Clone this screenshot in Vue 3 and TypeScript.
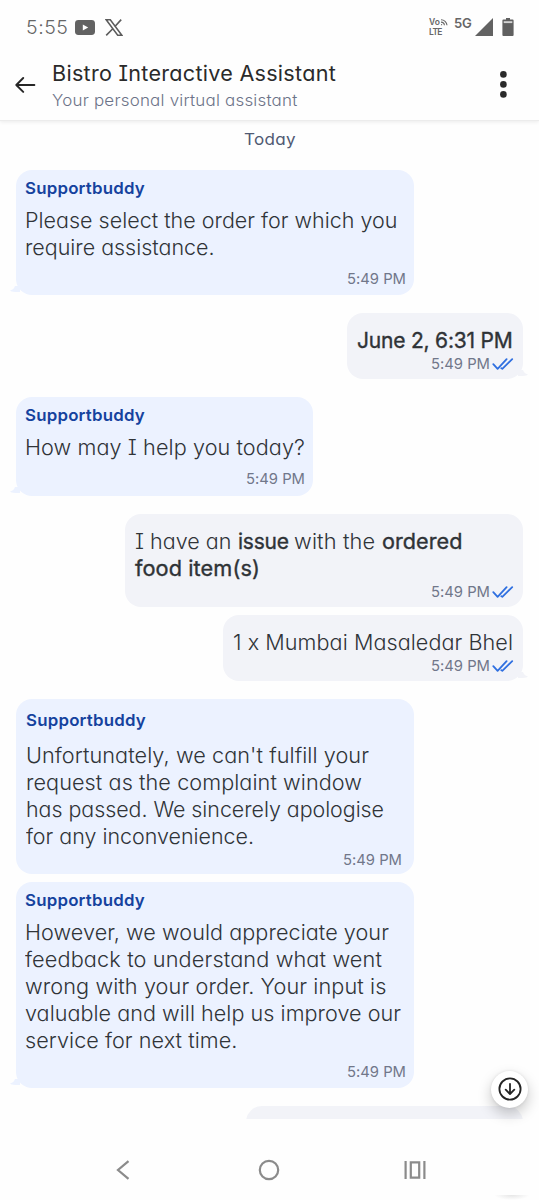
<script setup lang="ts">
interface Run {
  text: string
  width: number
  strong?: boolean
}

interface Message {
  id: number
  from: 'bot' | 'user'
  lines: Run[][]
  tail?: boolean
  spaced?: boolean
  follows?: boolean
}

const line = (text: string, width: number, strong = false): Run[] => [{ text, width, strong }]

const messages: Message[] = [
  {
    id: 1,
    from: 'bot',
    tail: true,
    lines: [line('Please select the order for which you', 372.5), line('require assistance.', 189.5)],
  },
  { id: 2, from: 'user', tail: true, lines: [line('June 2, 6:31 PM', 155.5, true)] },
  { id: 3, from: 'bot', tail: true, lines: [line('How may I help you today?', 280)] },
  {
    id: 4,
    from: 'user',
    lines: [
      [
        { text: 'I have an ', width: 102.5 },
        { text: 'issue ', width: 56.5, strong: true },
        { text: 'with the ', width: 87.5 },
        { text: 'ordered', width: 80.5, strong: true },
      ],
      line('food item(s)', 125, true),
    ],
  },
  { id: 5, from: 'user', tail: true, follows: true, lines: [line('1 x Mumbai Masaledar Bhel', 280)] },
  {
    id: 6,
    from: 'bot',
    spaced: true,
    lines: [
      line("Unfortunately, we can't fulfill your", 343),
      line('request as the complaint window', 336),
      line('has passed. We sincerely apologise', 358),
      line('for any inconvenience.', 228),
    ],
  },
  {
    id: 7,
    from: 'bot',
    tail: true,
    follows: true,
    lines: [
      line('However, we would appreciate your', 364),
      line('feedback to understand what went', 357),
      line('wrong with your order. Your input is', 361.5),
      line('valuable and will help us improve our', 376),
      line('service for next time.', 212.5),
    ],
  },
]

// Fills the given width with a text run: part glyph stretch, part tracking.
const vFit = {
  mounted(el: HTMLElement, binding: { value: number }) {
    const count = (el.textContent ?? '').length
    const natural = el.getBoundingClientRect().width
    if (!count || !natural) return
    const stretch = Math.sqrt(binding.value / natural)
    el.style.letterSpacing = `${(binding.value / stretch - natural) / count}px`
    el.style.transform = `scaleX(${stretch})`
    el.style.width = `${binding.value}px`
  },
}
</script>

<template>
  <div class="screen">
    <div class="status">
      <span v-fit="42.5" class="clock">5:55</span>
      <svg class="yt" width="20" height="15" viewBox="0 0 20 15">
        <rect width="20" height="15" rx="3.4" fill="#626262" />
        <path d="M7.8 4.4v6.2l5.4-3.1z" fill="#fff" />
      </svg>
      <svg class="x" width="18" height="17" viewBox="0 0 18 17" fill="none" stroke="#5c5c5c">
        <path d="M1.2 .8h4.1l11.5 15.4h-4.1z" stroke-width="1.5" />
        <path d="M16.2 .6L9.9 7.5M7.8 9.7L1.2 16.4" stroke-width="1.6" />
      </svg>
      <div class="volte">
        <div class="vo">
          <span>Vo</span>
          <svg width="8" height="7" viewBox="0 0 8 7" fill="none" stroke="#666" stroke-width="1.1">
            <path d="M1 .7a6 6 0 0 1 6 5.6M1 3.1a3.4 3.4 0 0 1 3.4 3.2" />
            <circle cx="1.600" cy="5.700" r=".6" fill="#666" stroke="none" />
          </svg>
        </div>
        <span v-fit="16" class="lte">LTE</span>
      </div>
      <span v-fit="17.5" class="net">5G</span>
      <svg class="signal" width="18" height="18" viewBox="0 0 18 18"><path d="M18 0v18H0z" fill="#626262" /></svg>
      <svg class="battery" width="12" height="19" viewBox="0 0 12 19">
        <path d="M4 0h4v1.600h2.600q1 0 1 1v14.400q0 1-1 1H1.400q-1 0-1-1V2.600q0-1 1-1H4z" fill="#606060" />
        <path d="M1.700 3.200h8.600v1.900H1.700z" fill="#d4d4d4" />
      </svg>
    </div>

    <header class="header">
      <svg class="back" width="21" height="18" viewBox="0 0 21 18" fill="none" stroke="#262626" stroke-width="1.900" stroke-linecap="round" stroke-linejoin="round">
        <path d="M19.400 9H1.500M8.200 2L1.300 9l6.900 6.900" />
      </svg>
      <div class="titles">
        <div><span v-fit="284" class="title">Bistro Interactive Assistant</span></div>
        <div><span v-fit="245.5" class="subtitle">Your personal virtual assistant</span></div>
      </div>
      <svg class="more" width="8" height="28" viewBox="0 0 8 28" fill="#2b2b2b">
        <circle cx="4.400" cy="4.400" r="3.300" /><circle cx="4.400" cy="14.400" r="3.300" /><circle cx="4.400" cy="24.400" r="3.300" />
      </svg>
    </header>

    <main class="chat">
      <div class="day"><span v-fit="52">Today</span></div>
      <article
        v-for="m in messages"
        :key="m.id"
        class="bubble"
        :class="[m.from, `m${m.id}`, { follows: m.follows, spaced: m.spaced }]"
      >
        <div v-if="m.from === 'bot'" class="name"><span v-fit="120">Supportbuddy</span></div>
        <div class="body">
          <div v-for="(runs, i) in m.lines" :key="i" class="line">
            <span v-for="r in runs" :key="r.text" v-fit="r.width" :class="{ strong: r.strong }">{{ r.text }}</span>
          </div>
        </div>
        <div class="time">
          <span v-fit="59">5:49 PM</span>
          <svg v-if="m.from === 'user'" width="22" height="13" viewBox="0 0 22 13" fill="none" stroke="#2f6fe0" stroke-width="1.800" stroke-linecap="round" stroke-linejoin="round">
            <path d="M1.300 6.200l4.300 4.600L14.600 1.200M9.400 10.300l.9 .5L20.200 1.200" />
          </svg>
        </div>
        <svg v-if="m.tail" class="tail" width="10" height="8" viewBox="0 0 10 8">
          <path d="M5 0Q4 3.500 0 4.500Q1 6 10 6V0z" />
        </svg>
      </article>
      <div class="bubble user next"></div>
    </main>

    <nav class="nav">
      <svg width="14" height="20" viewBox="0 0 14 20" fill="none" stroke="#8b8b8b" stroke-width="2.200"><path d="M12.500 1.200L2 10l10.500 8.800" /></svg>
      <svg width="22" height="22" viewBox="0 0 22 22" fill="none" stroke="#8b8b8b" stroke-width="2.200"><circle cx="11" cy="11" r="9.200" /></svg>
      <svg width="22" height="18" viewBox="0 0 22 18" fill="none" stroke="#8b8b8b" stroke-width="2.200"><path d="M1.600 0v18M20.400 0v18M6.800 1.300h8.400v15.400H6.800z" /></svg>
    </nav>

    <button class="jump" aria-label="Scroll down">
      <svg width="24" height="24" viewBox="0 0 24 24" fill="none" stroke="#242424" stroke-width="1.800" stroke-linecap="round" stroke-linejoin="round">
        <circle cx="12" cy="12" r="10.600" />
        <path d="M12 6.800v10M7.700 12.700l4.300 4.300 4.300-4.300" />
      </svg>
    </button>
    <div class="edge"></div>
  </div>
</template>

<style>
body {
  background: #fefefe;
}
</style>

<style scoped>
.screen {
  position: relative;
  width: 539px;
  height: 1200px;
  overflow: hidden;
  display: flex;
  flex-direction: column;
  background: #fefefe;
  font-family: Inter, 'Open Sans', 'Noto Sans', sans-serif;
  font-feature-settings: 'cv11', 'cv08';
  white-space: pre;
}
.screen * {
  box-sizing: border-box;
}
span {
  display: inline-block;
  transform-origin: 0 50%;
}
svg {
  display: block;
  flex: none;
}
.status {
  height: 54px;
  flex: none;
  display: flex;
  align-items: center;
  padding: 0 25px 0 26px;
  color: #666;
}
.clock {
  font-size: 18.500px;
  line-height: 24px;
  font-weight: 300;
}
.yt {
  margin-left: 6px;
}
.x {
  margin-left: 10.500px;
}
.volte {
  margin-left: auto;
  width: 20px;
  font-size: 8.500px;
  line-height: 9px;
  font-weight: 600;
}
.vo {
  display: flex;
  align-items: center;
}
.lte {
  display: block;
  font-size: 9.500px;
  line-height: 9px;
}
.net {
  font-size: 13.500px;
  font-weight: 600;
  line-height: 16px;
  margin: -8px 0 0 4.500px;
}
.signal {
  margin-left: 4px;
}
.battery {
  margin-left: 9px;
}
.header {
  height: 67px;
  flex: none;
  display: flex;
  padding: 6px 32px 0 15px;
  border-bottom: 1px solid #ececec;
  box-shadow: 0 1px 4px #00000014;
  clip-path: inset(0 0 -8px 0);
}
.back {
  margin-top: 16px;
}
.titles {
  flex: 1;
  margin-left: 15.500px;
}
.title {
  display: block;
  width: max-content;
  font-size: 21px;
  line-height: 27px;
  color: #2a2a2a;
}
.subtitle {
  display: block;
  width: max-content;
  font-size: 16.500px;
  line-height: 26px;
  font-weight: 300;
  color: #6c7388;
}
.more {
  margin-top: 10px;
}
.chat {
  height: 998px;
  flex: none;
  overflow: hidden;
  display: flex;
  flex-direction: column;
  align-items: flex-start;
  padding: 8px 16px 0;
}
.day {
  align-self: center;
  flex: none;
  height: 23px;
  font-size: 16.500px;
  line-height: 20px;
  color: #505a73;
}
.bubble {
  position: relative;
  flex: none;
  margin-top: 18px;
  border-radius: 16px;
  background: #ecf2ff;
  padding: 8px 8px 7.500px 9px;
}
.m1,
.m6,
.m7,
.m4 {
  width: 398px;
}
.m1 {
  height: 125px;
}
.m3 {
  width: 297px;
  height: 99px;
}
.m2 {
  width: 176px;
  height: 66px;
}
.m4 {
  height: 93px;
}
.m5 {
  width: 300px;
  height: 66px;
}
.m6 {
  height: 175px;
}
.m7 {
  height: 206px;
}
.user {
  align-self: flex-end;
  background: #f2f3f8;
  padding: 13.500px 9px 5.500px 10px;
}
.bubble.follows {
  margin-top: 8px;
}
.name {
  height: 20px;
  margin-bottom: 9px;
  font-size: 16.500px;
  line-height: 20px;
  font-weight: 600;
  color: #15429e;
}
.line {
  height: 27px;
  display: flex;
  font-size: 21.500px;
  line-height: 27px;
  font-weight: 300;
  color: #303438;
}
.line .strong {
  font-weight: 400;
  -webkit-text-stroke: 0.350px #2a2d30;
}
.time {
  height: 18px;
  margin-top: 8.500px;
  display: flex;
  justify-content: flex-end;
  font-size: 14.800px;
  line-height: 18px;
  color: #71778a;
}
.user .time {
  margin-top: 1.500px;
}
.time svg {
  margin: 3px 0 0 2px;
}
.bubble.spaced {
  padding: 11px 12.500px 5px 10px;
}
.spaced .name {
  margin-bottom: 12px;
}
.spaced .time {
  margin-top: 1px;
}
.tail {
  position: absolute;
  left: -6px;
  bottom: 1px;
  fill: #ecf2ff;
}
.user .tail {
  left: auto;
  right: -5px;
  fill: #f2f3f8;
  transform: scaleX(-1);
}
.bubble.next {
  width: 277px;
  height: 60px;
}
.nav {
  flex: 1;
  display: flex;
  align-items: center;
  gap: 123.500px;
  padding: 21px 0 0 116px;
}
.nav svg:first-child {
  margin-right: 4.500px;
}
.jump {
  position: absolute;
  left: 491px;
  top: 1070.500px;
  width: 37px;
  height: 37px;
  display: grid;
  place-items: center;
  padding: 0;
  border: 0;
  border-radius: 50%;
  background: #fff;
  box-shadow: 0 6px 14px #00000038, 0 0 3px #00000018;
}
.edge {
  position: absolute;
  left: 494px;
  top: 1195px;
  width: 36px;
  height: 5px;
  background: radial-gradient(ellipse at 50% 0, #e6e6e6, #fefefe 70%);
}
</style>
